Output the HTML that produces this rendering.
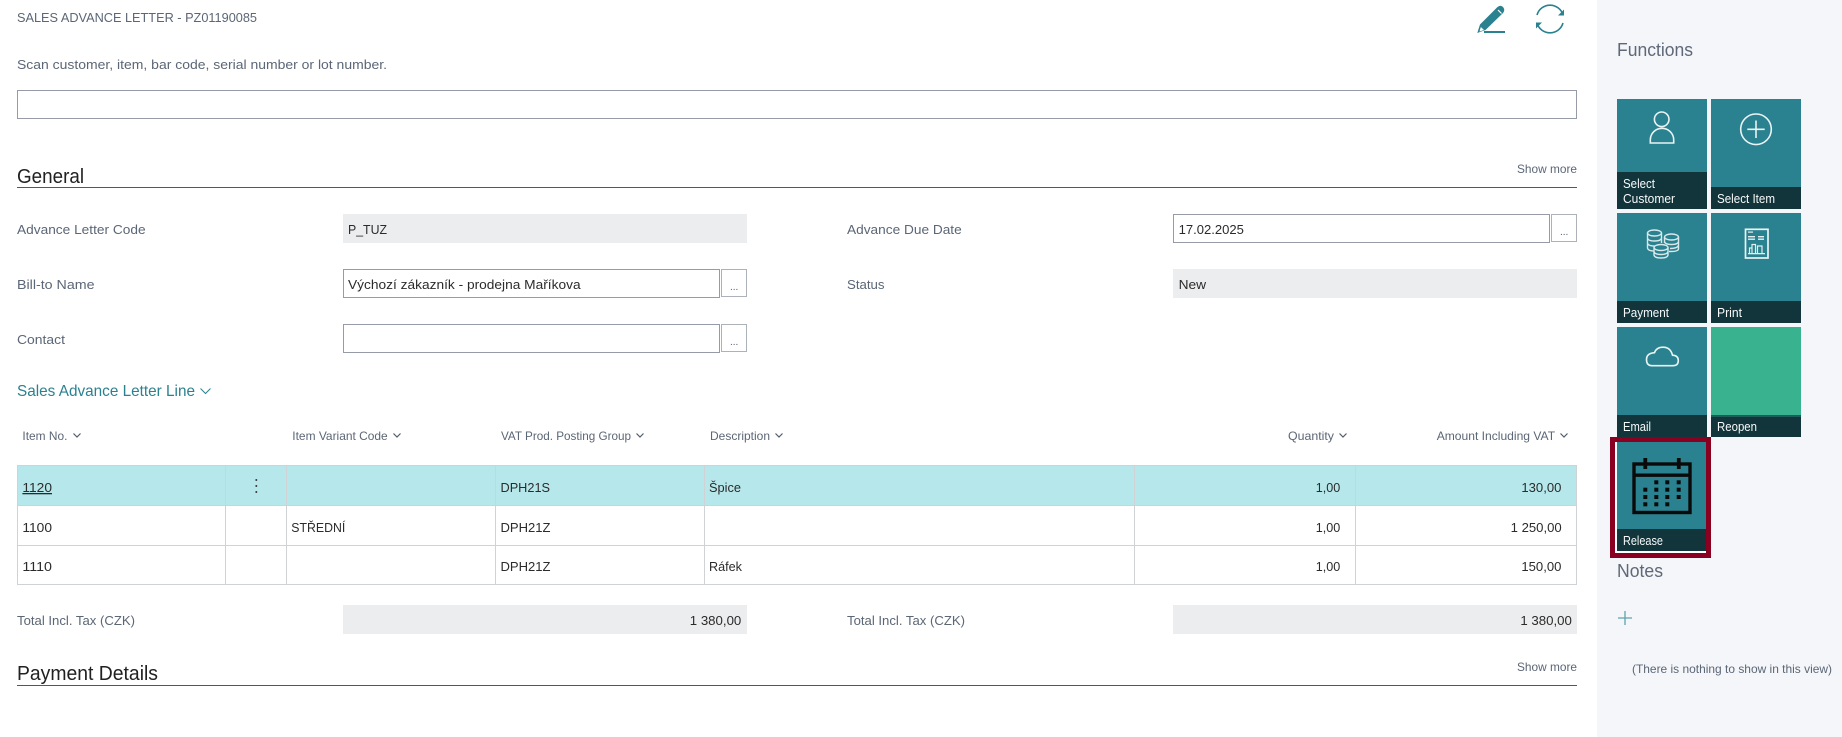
<!DOCTYPE html>
<html><head><meta charset="utf-8"><title>Sales Advance Letter</title>
<style>
html,body{margin:0;padding:0;width:1842px;height:737px;overflow:hidden;background:#fff}
svg{display:block}
text{font-family:"Liberation Sans",sans-serif;font-size:13px;fill:#2b2b2b}
.l{fill:#5b6676}
.h{font-size:12px;fill:#5b6676}
.s{font-size:12px;fill:#5b6676}
.t{font-size:12.5px;fill:#f7fafa}
.big{font-size:20px;fill:#212121}
.side{font-size:18px;fill:#5f6878}
.d{font-size:10px;fill:#505c6d}
.box{fill:#fff;stroke:#969ba7;stroke-width:1}
.btn{fill:#fff;stroke:#adb1ba;stroke-width:1}
.g{fill:#ecedef}
.ch{fill:none;stroke:#505c6d;stroke-width:1.2}
.ic{fill:none;stroke:#eaf3f4;stroke-width:1.6}
</style></head><body>
<svg width="1842" height="737" viewBox="0 0 1842 737" xmlns="http://www.w3.org/2000/svg">
<rect width="1842" height="737" fill="#fff"/>
<rect x="1597" y="0" width="245" height="737" fill="#f4f6f9"/>

<!-- header -->
<text x="17" y="22" class="l" textLength="240" lengthAdjust="spacingAndGlyphs">SALES ADVANCE LETTER - PZ01190085</text>
<text x="17" y="69" class="l" textLength="370" lengthAdjust="spacingAndGlyphs">Scan customer, item, bar code, serial number or lot number.</text>
<rect class="box" x="17.5" y="90.5" width="1559" height="28"/>

<!-- pencil -->
<path d="M1477.3 33 L1480 24.5 L1497.5 7 Q1500.5 4.5 1503 7 Q1505.5 10 1503 13 L1485.5 30 Z" fill="#2a818f"/>
<path d="M1498 10 L1501.5 13.5" stroke="#fff" stroke-width="1.2" fill="none"/>
<path d="M1479.5 31.5 L1480.8 27 L1484 30 Z" fill="#fff"/>
<rect x="1484" y="31" width="21" height="2" fill="#2a818f"/>
<!-- refresh -->
<path d="M1537 15 A13.5 13.5 0 0 1 1563 15" fill="none" stroke="#2a818f" stroke-width="1.6"/>
<path d="M1537 23 A13.5 13.5 0 0 0 1563 23" fill="none" stroke="#2a818f" stroke-width="1.6"/>
<path d="M1558 15.5 L1564 15.5 L1564 9.5 Z" fill="#2a818f"/>
<path d="M1536 22.5 L1542 22.5 L1536 28.5 Z" fill="#2a818f"/>

<!-- General -->
<text x="17" y="183" class="big" textLength="67" lengthAdjust="spacingAndGlyphs">General</text>
<text x="1517" y="173" class="s" textLength="60" lengthAdjust="spacingAndGlyphs">Show more</text>
<rect x="17" y="187" width="1560" height="1" fill="#505862"/>

<text x="17" y="234" class="l" textLength="128.6" lengthAdjust="spacingAndGlyphs">Advance Letter Code</text>
<rect class="g" x="343" y="214" width="404" height="29"/>
<text x="348" y="234" textLength="39" lengthAdjust="spacingAndGlyphs">P_TUZ</text>

<text x="17" y="289" class="l" textLength="77.5" lengthAdjust="spacingAndGlyphs">Bill-to Name</text>
<rect class="box" x="343.5" y="269.5" width="376" height="28"/>
<text x="348" y="289" textLength="232.6" lengthAdjust="spacingAndGlyphs">Výchozí zákazník - prodejna Maříkova</text>
<rect class="btn" x="721.5" y="269.5" width="25" height="27"/>
<text x="730" y="290" class="d">...</text>

<text x="17" y="344" class="l" textLength="48" lengthAdjust="spacingAndGlyphs">Contact</text>
<rect class="box" x="343.5" y="324.5" width="376" height="28"/>
<rect class="btn" x="721.5" y="324.5" width="25" height="27"/>
<text x="730" y="345" class="d">...</text>

<text x="847" y="234" class="l" textLength="114.7" lengthAdjust="spacingAndGlyphs">Advance Due Date</text>
<rect class="box" x="1173.5" y="214.5" width="376" height="28"/>
<text x="1178.6" y="234" textLength="65.3" lengthAdjust="spacingAndGlyphs">17.02.2025</text>
<rect class="btn" x="1551.5" y="214.5" width="25" height="27"/>
<text x="1560" y="235" class="d">...</text>

<text x="847" y="289" class="l" textLength="37.5" lengthAdjust="spacingAndGlyphs">Status</text>
<rect class="g" x="1173" y="269" width="404" height="29"/>
<text x="1178.6" y="289" textLength="27.5" lengthAdjust="spacingAndGlyphs">New</text>

<!-- Lines title -->
<text x="17" y="396" style="font-size:16px;fill:#2a818f" textLength="178" lengthAdjust="spacingAndGlyphs">Sales Advance Letter Line</text>
<path d="M200.5 388.5 L205.5 393.5 L210.5 388.5" fill="none" stroke="#2a818f" stroke-width="1"/>

<!-- table headers -->
<text x="22.4" y="440" class="h" textLength="45" lengthAdjust="spacingAndGlyphs">Item No.</text>
<path class="ch" d="M73.5 433.5 L77 437 L80.5 433.5"/>
<text x="292.3" y="440" class="h" textLength="95.4" lengthAdjust="spacingAndGlyphs">Item Variant Code</text>
<path class="ch" d="M393.5 433.5 L397 437 L400.5 433.5"/>
<text x="501" y="440" class="h" textLength="130" lengthAdjust="spacingAndGlyphs">VAT Prod. Posting Group</text>
<path class="ch" d="M636.5 433.5 L640 437 L643.5 433.5"/>
<text x="710" y="440" class="h" textLength="60" lengthAdjust="spacingAndGlyphs">Description</text>
<path class="ch" d="M775.5 433.5 L779 437 L782.5 433.5"/>
<text x="1288" y="440" class="h" textLength="46" lengthAdjust="spacingAndGlyphs">Quantity</text>
<path class="ch" d="M1339.5 433.5 L1343 437 L1346.5 433.5"/>
<text x="1436.7" y="440" class="h" textLength="118.4" lengthAdjust="spacingAndGlyphs">Amount Including VAT</text>
<path class="ch" d="M1560.5 433.5 L1564 437 L1567.5 433.5"/>

<!-- table -->
<rect x="17" y="465" width="1560" height="41" fill="#b6e8eb"/>
<g fill="#d0d3d5">
<rect x="17" y="465" width="1560" height="1"/>
<rect x="17" y="505" width="1560" height="1"/>
<rect x="17" y="545" width="1560" height="1"/>
<rect x="17" y="584" width="1560" height="1"/>
<rect x="17" y="465" width="1" height="120"/>
<rect x="225" y="465" width="1" height="120"/>
<rect x="286" y="465" width="1" height="120"/>
<rect x="495" y="465" width="1" height="120"/>
<rect x="704" y="465" width="1" height="120"/>
<rect x="1134" y="465" width="1" height="120"/>
<rect x="1355" y="465" width="1" height="120"/>
<rect x="1576" y="465" width="1" height="120"/>
</g>
<text x="22.4" y="492" textLength="29.6" lengthAdjust="spacingAndGlyphs" text-decoration="underline">1120</text>
<circle cx="256.3" cy="480" r="1" fill="#333"/><circle cx="256.3" cy="486" r="1" fill="#333"/><circle cx="256.3" cy="492" r="1" fill="#333"/>
<text x="500.5" y="492" textLength="49.5" lengthAdjust="spacingAndGlyphs">DPH21S</text>
<text x="709" y="492" textLength="32" lengthAdjust="spacingAndGlyphs">Špice</text>
<text x="1315.8" y="492" textLength="24.5" lengthAdjust="spacingAndGlyphs">1,00</text>
<text x="1521.4" y="492" textLength="40" lengthAdjust="spacingAndGlyphs">130,00</text>

<text x="22.4" y="532" textLength="29.6" lengthAdjust="spacingAndGlyphs">1100</text>
<text x="291.3" y="532" textLength="54" lengthAdjust="spacingAndGlyphs">STŘEDNÍ</text>
<text x="500.5" y="532" textLength="50" lengthAdjust="spacingAndGlyphs">DPH21Z</text>
<text x="1315.8" y="532" textLength="24.5" lengthAdjust="spacingAndGlyphs">1,00</text>
<text x="1510.7" y="532" textLength="51" lengthAdjust="spacingAndGlyphs">1 250,00</text>

<text x="22.4" y="571" textLength="29.6" lengthAdjust="spacingAndGlyphs">1110</text>
<text x="500.5" y="571" textLength="50" lengthAdjust="spacingAndGlyphs">DPH21Z</text>
<text x="709" y="571" textLength="33" lengthAdjust="spacingAndGlyphs">Ráfek</text>
<text x="1315.8" y="571" textLength="24.5" lengthAdjust="spacingAndGlyphs">1,00</text>
<text x="1521.4" y="571" textLength="40" lengthAdjust="spacingAndGlyphs">150,00</text>

<!-- totals -->
<text x="17" y="625" class="l" textLength="118" lengthAdjust="spacingAndGlyphs">Total Incl. Tax (CZK)</text>
<rect class="g" x="343" y="605" width="404" height="29"/>
<text x="689.8" y="625" textLength="51.5" lengthAdjust="spacingAndGlyphs">1 380,00</text>
<text x="847" y="625" class="l" textLength="118" lengthAdjust="spacingAndGlyphs">Total Incl. Tax (CZK)</text>
<rect class="g" x="1173" y="605" width="404" height="29"/>
<text x="1520.4" y="625" textLength="51.5" lengthAdjust="spacingAndGlyphs">1 380,00</text>

<!-- Payment details -->
<text x="17" y="680" class="big" textLength="141" lengthAdjust="spacingAndGlyphs">Payment Details</text>
<text x="1517" y="671" class="s" textLength="60" lengthAdjust="spacingAndGlyphs">Show more</text>
<rect x="17" y="685" width="1560" height="1" fill="#505862"/>

<!-- Sidebar -->
<text x="1617" y="56" class="side" textLength="76" lengthAdjust="spacingAndGlyphs">Functions</text>

<!-- tiles -->
<g fill="#2a818f">
<rect x="1617" y="99" width="90" height="110"/>
<rect x="1711" y="99" width="90" height="110"/>
<rect x="1617" y="213" width="90" height="110"/>
<rect x="1711" y="213" width="90" height="110"/>
<rect x="1617" y="327" width="90" height="110"/>
</g>
<rect x="1711" y="327" width="90" height="110" fill="#38b28f"/>
<rect x="1711" y="415" width="90" height="2" fill="#1d5c57"/>
<g fill="#12343b">
<rect x="1617" y="172" width="90" height="37"/>
<rect x="1711" y="187" width="90" height="22"/>
<rect x="1617" y="301" width="90" height="22"/>
<rect x="1711" y="301" width="90" height="22"/>
<rect x="1617" y="415" width="90" height="22"/>
<rect x="1711" y="417" width="90" height="20"/>
</g>
<text x="1623" y="188" class="t" textLength="32" lengthAdjust="spacingAndGlyphs">Select</text>
<text x="1623" y="203" class="t" textLength="52" lengthAdjust="spacingAndGlyphs">Customer</text>
<text x="1717" y="203" class="t" textLength="58" lengthAdjust="spacingAndGlyphs">Select Item</text>
<text x="1623" y="317" class="t" textLength="46" lengthAdjust="spacingAndGlyphs">Payment</text>
<text x="1717" y="317" class="t" textLength="25" lengthAdjust="spacingAndGlyphs">Print</text>
<text x="1623" y="431" class="t" textLength="28" lengthAdjust="spacingAndGlyphs">Email</text>
<text x="1717" y="431" class="t" textLength="40" lengthAdjust="spacingAndGlyphs">Reopen</text>

<!-- person -->
<circle class="ic" cx="1661.7" cy="119.3" r="7.3"/>
<path class="ic" d="M1650.3 143 L1650.3 140 A11.7 11.7 0 0 1 1673.7 140 L1673.7 143 Z"/>
<!-- plus circle -->
<circle class="ic" cx="1756" cy="129.3" r="15.3"/>
<path class="ic" d="M1756 120.5 V138 M1747.3 129.3 H1764.7"/>
<!-- coins -->
<g class="ic" style="stroke-width:1.4;stroke:#d9e8ea">
<ellipse cx="1654.5" cy="233" rx="7" ry="3"/>
<path d="M1647.5 233 V248 Q1648 251 1654.5 251 M1661.5 233 V243 M1647.5 238 Q1648 241 1654.5 241 Q1661 241 1661.5 238 M1647.5 243 Q1648 246 1654.5 246"/>
<ellipse cx="1671.5" cy="237" rx="7" ry="3"/>
<path d="M1664.5 237 V243 M1678.5 237 V249 Q1678 251.5 1671 251.5 L1669 251.5 M1664.5 241.5 Q1665 244.5 1671.5 244.5 Q1678 244.5 1678.5 241.5 M1670 248.5 Q1677 248.5 1678.5 245.5"/>
<ellipse cx="1661" cy="247.5" rx="7" ry="3"/>
<path d="M1654 247.5 V255 Q1654.5 258 1661 258 Q1667.5 258 1668 255 V247.5 M1654 251.5 Q1654.5 254.5 1661 254.5 Q1667.5 254.5 1668 251.5"/>
</g>
<!-- print doc -->
<rect x="1745.5" y="229.3" width="22.5" height="28.7" fill="none" stroke="#eaf3f4" stroke-width="1.7"/>
<g fill="#e3eef0">
<rect x="1748" y="231.5" width="5" height="1.2"/>
<rect x="1748" y="236" width="7" height="1.4"/>
<rect x="1758" y="236" width="6" height="1.4"/>
<rect x="1748" y="238.5" width="7" height="1.4"/>
<rect x="1758" y="238.5" width="6" height="1.4"/>
<rect x="1748" y="253" width="17" height="1.3"/>
</g>
<path d="M1749.5 253 V248 H1752 V253 M1752 253 V244.5 H1755.5 V253 M1757.5 253 V246 H1762 V253" fill="none" stroke="#e3eef0" stroke-width="1.2"/>
<!-- cloud -->
<path class="ic" d="M1652 365.7 H1673 Q1678.3 365.7 1678.3 360.5 Q1678.3 355.5 1672.5 355.2 Q1670.5 347.2 1663 347.2 Q1656.5 347.2 1654.5 352.7 Q1646.5 353.2 1646.5 359.5 Q1646.5 365.7 1652 365.7 Z"/>

<!-- Release tile with highlight -->
<rect x="1612.5" y="439.5" width="96" height="116" fill="#fff" stroke="#8a0020" stroke-width="5"/>
<rect x="1617" y="442" width="89" height="109" fill="#2a818f"/>
<rect x="1617" y="529" width="89" height="22" fill="#12343b"/>
<text x="1623" y="545" class="t" textLength="40" lengthAdjust="spacingAndGlyphs">Release</text>
<!-- calendar -->
<g fill="none" stroke="#0a0a0a">
<rect x="1634" y="464" width="56" height="48.5" stroke-width="3.4"/>
<path d="M1632.5 475.2 H1691.5" stroke-width="3.4"/>
<path d="M1645.3 458 V469 M1678.8 458 V469" stroke-width="3.8"/>
</g>
<g fill="#0a0a0a">
<rect x="1654.3" y="480.3" width="4" height="4"/><rect x="1665.3" y="480.3" width="4" height="4"/><rect x="1676.7" y="480.3" width="4" height="4"/>
<rect x="1643.3" y="487.7" width="4" height="4"/><rect x="1654.3" y="487.7" width="4" height="4"/><rect x="1665.3" y="487.7" width="4" height="4"/><rect x="1676.7" y="487.7" width="4" height="4"/>
<rect x="1643.3" y="495" width="4" height="4"/><rect x="1654.3" y="495" width="4" height="4"/><rect x="1665.3" y="495" width="4" height="4"/><rect x="1676.7" y="495" width="4" height="4"/>
<rect x="1643.3" y="502.3" width="4" height="4"/><rect x="1654.3" y="502.3" width="4" height="4"/><rect x="1665.3" y="502.3" width="4" height="4"/>
</g>

<!-- Notes -->
<text x="1617" y="577" class="side" textLength="46" lengthAdjust="spacingAndGlyphs">Notes</text>
<path d="M1625 611 V625 M1618 618 H1632" stroke="#5fa3ae" stroke-width="1.3" fill="none"/>
<text x="1632" y="673" style="font-size:12px;fill:#5b6676" textLength="200" lengthAdjust="spacingAndGlyphs">(There is nothing to show in this view)</text>
</svg>
</body></html>
